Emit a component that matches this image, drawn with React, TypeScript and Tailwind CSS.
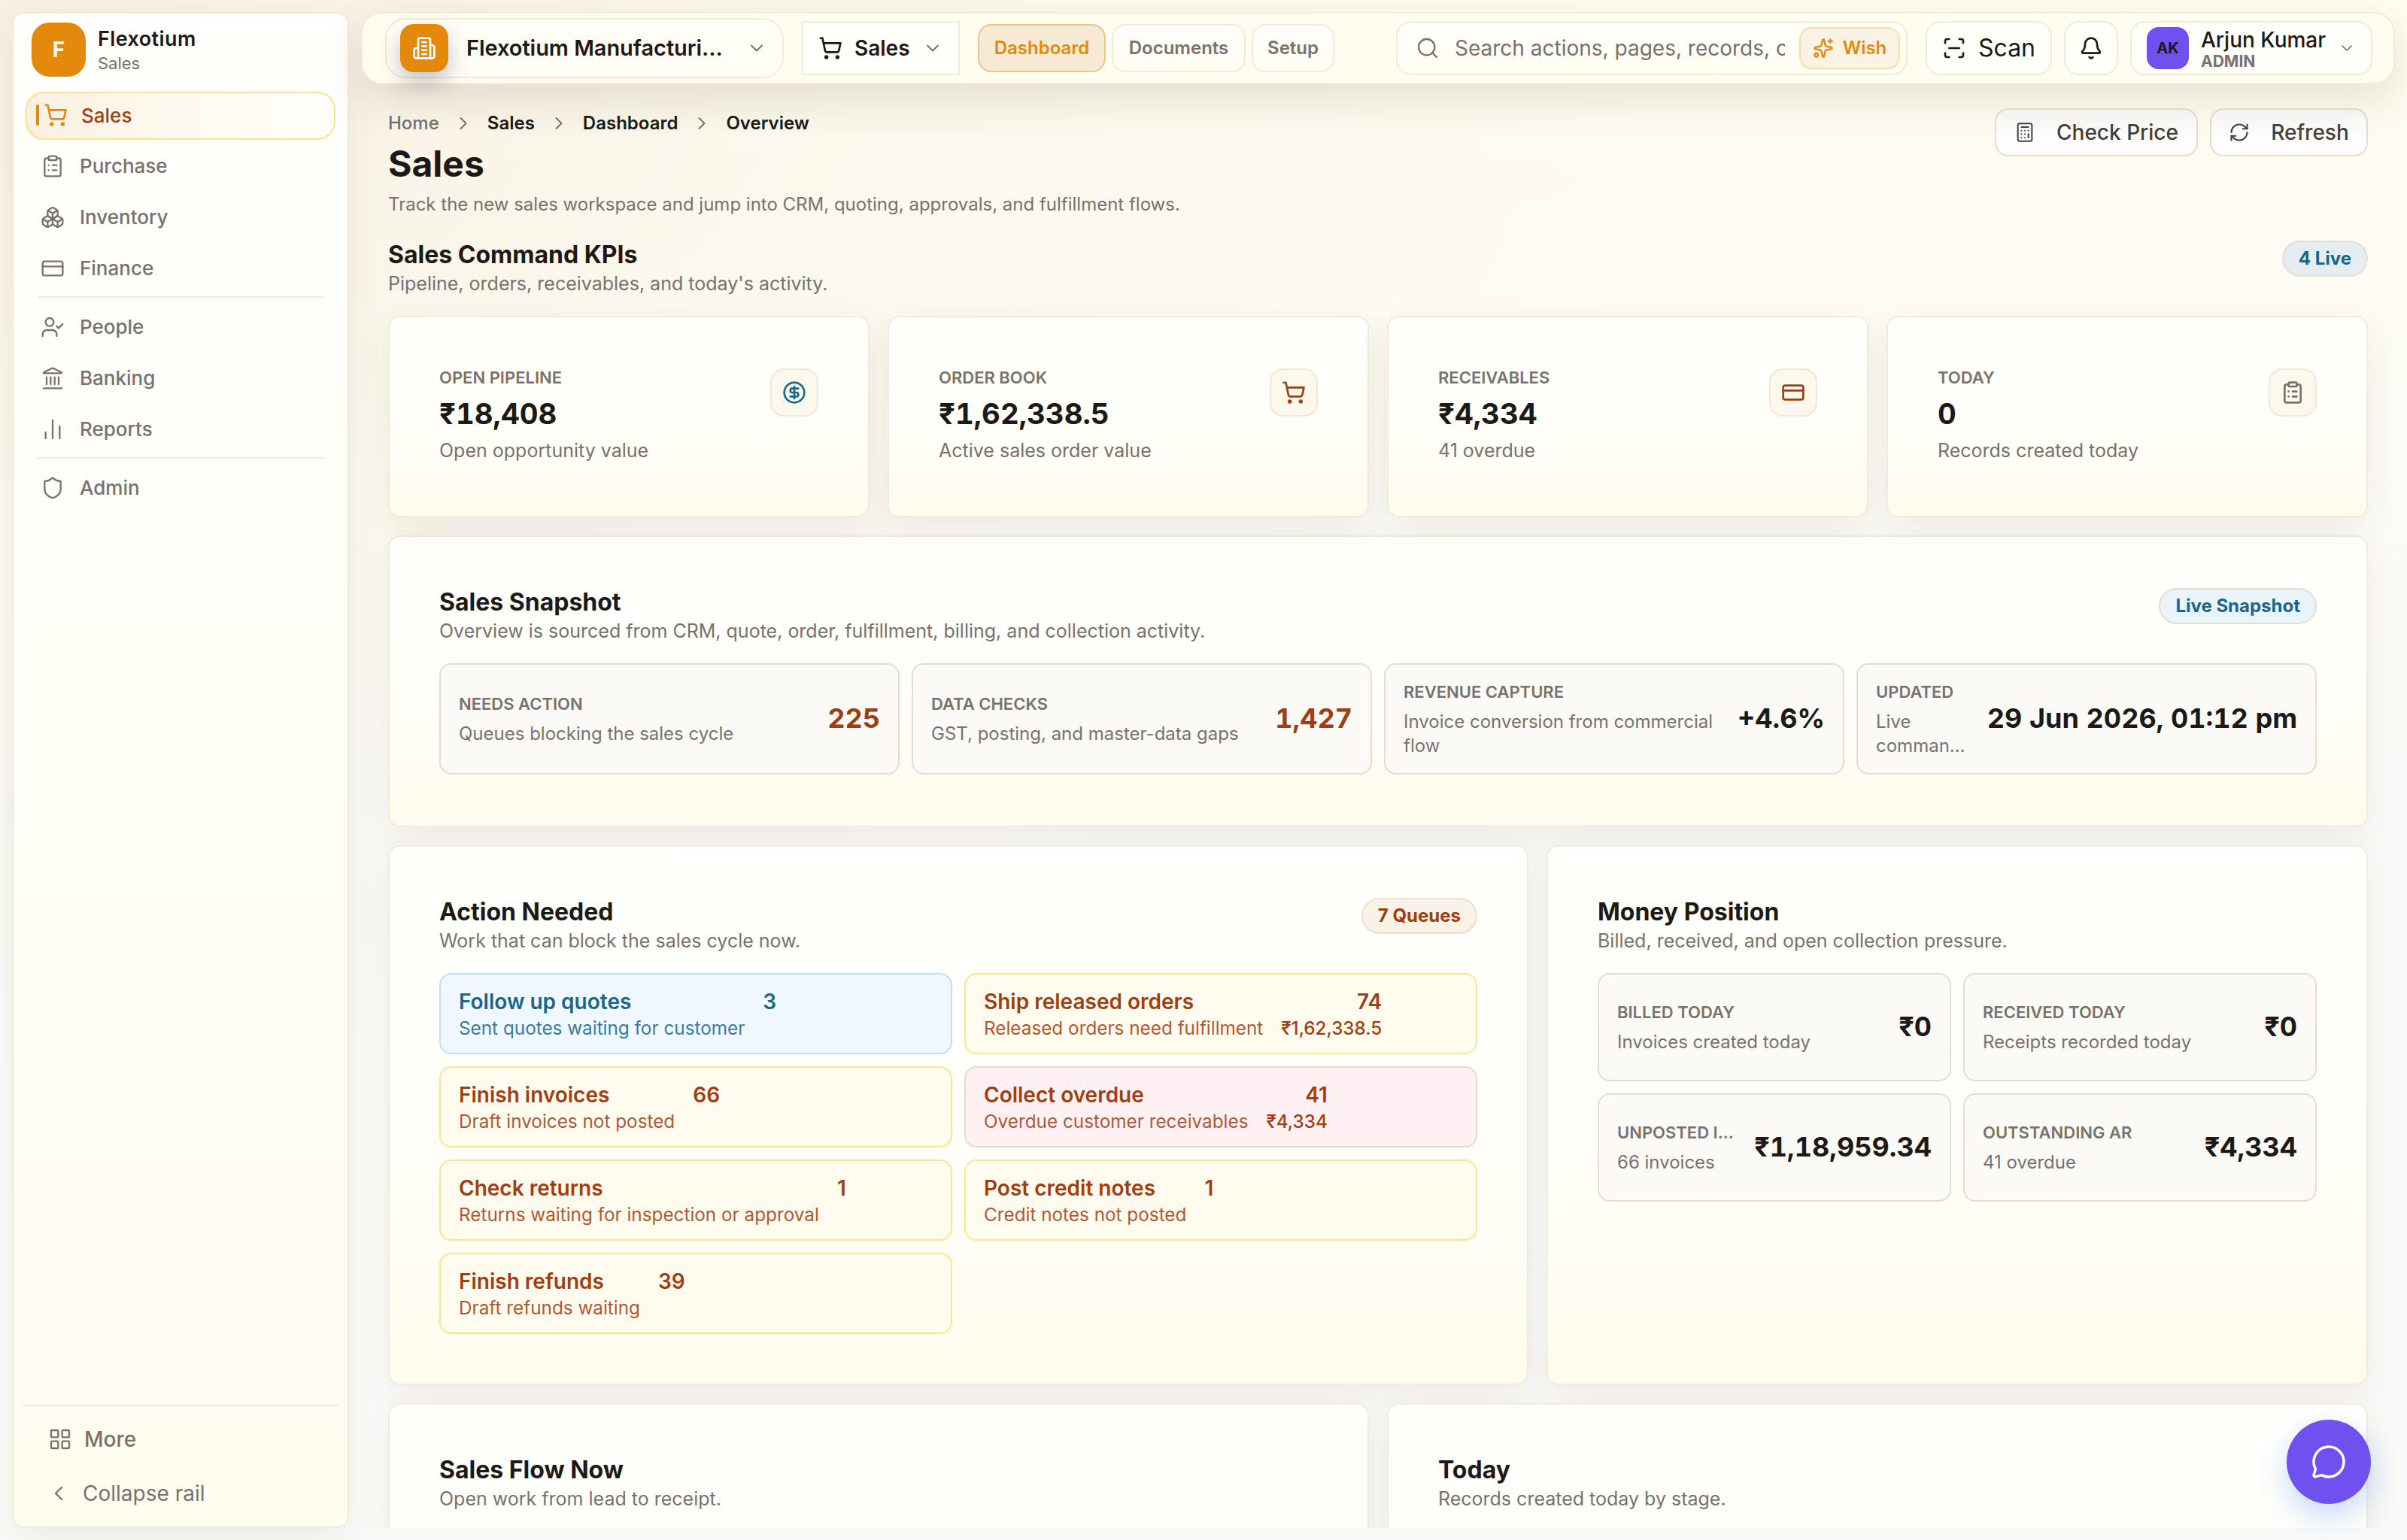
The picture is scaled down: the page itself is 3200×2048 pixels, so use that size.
import type { ReactNode } from "react";
import {
  Bell,
  Boxes,
  Calculator,
  ChartNoAxesColumn,
  ChevronDown,
  ChevronLeft,
  ChevronRight,
  CircleDollarSign,
  ClipboardList,
  CreditCard,
  Landmark,
  LayoutGrid,
  MessageCircle,
  RefreshCw,
  ScanLine,
  Search,
  Shield,
  ShoppingCart,
  Sparkles,
  UserCheck,
  type LucideIcon,
} from "lucide-react";

const navGroups: { label: string; icon: LucideIcon }[][] = [
  [
    { label: "Purchase", icon: ClipboardList },
    { label: "Inventory", icon: Boxes },
    { label: "Finance", icon: CreditCard },
  ],
  [
    { label: "People", icon: UserCheck },
    { label: "Banking", icon: Landmark },
    { label: "Reports", icon: ChartNoAxesColumn },
  ],
  [{ label: "Admin", icon: Shield }],
];

const kpis = [
  { label: "Open pipeline", value: "₹18,408", note: "Open opportunity value", icon: CircleDollarSign, tone: "text-[#1b658c]" },
  { label: "Order book", value: "₹1,62,338.5", note: "Active sales order value", icon: ShoppingCart, tone: "text-[#9f3e12]" },
  { label: "Receivables", value: "₹4,334", note: "41 overdue", icon: CreditCard, tone: "text-[#9f3e12]" },
  { label: "Today", value: "0", note: "Records created today", icon: ClipboardList, tone: "text-[#78716c]" },
];

const snapshot = [
  { label: "Needs action", note: "Queues blocking the sales cycle", value: "225", warn: true },
  { label: "Data checks", note: "GST, posting, and master-data gaps", value: "1,427", warn: true },
  { label: "Revenue capture", note: "Invoice conversion from commercial flow", value: "+4.6%" },
  { label: "Updated", note: "Live comman…", value: "29 Jun 2026, 01:12 pm" },
];

const money = [
  { label: "Billed today", note: "Invoices created today", value: "₹0" },
  { label: "Received today", note: "Receipts recorded today", value: "₹0" },
  { label: "Unposted i…", note: "66 invoices", value: "₹1,18,959.34" },
  { label: "Outstanding AR", note: "41 overdue", value: "₹4,334" },
];

const amber = "border-[#fbe591] bg-[#fffbee] text-[#9f3e12]";
const sky = "border-[#bfdff8] bg-[#f0f8ff] text-[#1b658c]";
const rose = "border-[#e7d8d0] bg-[#fff1f3] text-[#9f3e12]";

const queues = [
  { title: "Follow up quotes", note: "Sent quotes waiting for customer", count: "3", tone: sky },
  { title: "Ship released orders", note: "Released orders need fulfillment", count: "74", amount: "₹1,62,338.5", tone: amber },
  { title: "Finish invoices", note: "Draft invoices not posted", count: "66", tone: amber },
  { title: "Collect overdue", note: "Overdue customer receivables", count: "41", amount: "₹4,334", tone: rose },
  { title: "Check returns", note: "Returns waiting for inspection or approval", count: "1", tone: amber },
  { title: "Post credit notes", note: "Credit notes not posted", count: "1", tone: amber },
  { title: "Finish refunds", note: "Draft refunds waiting", count: "39", tone: amber },
];

function BuildingIcon() {
  return (
    <svg className="size-8" viewBox="0 0 24 24" fill="none" stroke="currentColor" strokeWidth="2" strokeLinecap="round" strokeLinejoin="round">
      <path d="M6 22V4a2 2 0 0 1 2-2h8a2 2 0 0 1 2 2v18Z" />
      <path d="M6 12H4a2 2 0 0 0-2 2v6a2 2 0 0 0 2 2h2" />
      <path d="M18 9h2a2 2 0 0 1 2 2v9a2 2 0 0 1-2 2h-2" />
      <path d="M10 6h4M10 10h4M10 14h4M10 18h4" />
    </svg>
  );
}

function Sidebar() {
  return (
    <aside className="flex h-[2016px] w-[448px] shrink-0 flex-col rounded-2xl border-2 border-[#f3ead6] bg-linear-to-b from-[#fffffd] to-[#fffdf0] shadow-[0_16px_48px_rgba(60,50,30,0.07)]">
      <div className="flex items-center gap-4 pt-3 pl-6">
        <div className="flex size-[72px] items-center justify-center rounded-[24px] bg-[#e5890c] text-[28px] font-bold text-white">F</div>
        <div className="pt-0.5">
          <div className="text-[27px] leading-[34px] font-semibold tracking-[0.015em] text-[#1c1917]">Flexotium</div>
          <div className="text-[22px] leading-[30px] text-[#78716c]">Sales</div>
        </div>
      </div>

      <nav className="mt-5 flex flex-col gap-1 px-4">
        <div className="flex h-16 items-center rounded-[24px] border-2 border-[#fae391] bg-linear-to-r from-[#f9f0e1] via-[#fffaf0] to-[#fffefb] pb-0.5 pl-3 text-[26px] font-medium text-[#9f3e12]">
          <span className="h-7 w-1 rounded-full bg-[#e5890c]" />
          <ShoppingCart className="ml-1.5 size-8 text-[#e5890c]" strokeWidth={2} />
          <span className="ml-[18px]">Sales</span>
        </div>
        {navGroups.map((group, i) => (
          <div key={i} className="flex flex-col gap-1">
            {i > 0 && <div className="mx-4 mb-1 h-0.5 bg-[#f5ecd8]" />}
            {group.map(({ label, icon: Icon }) => (
              <div key={label} className="flex h-16 items-center gap-5 pb-[3px] pl-5 text-[26px] font-medium text-[#78716c]">
                <Icon className="size-8" strokeWidth={1.75} />
                {label}
              </div>
            ))}
          </div>
        ))}
      </nav>

      <div className="mx-3 mt-auto h-[162px] border-t-2 border-[#f3ead6] text-[28px] text-[#78716c]">
        <div className="mt-2 flex h-[72px] items-center gap-4 pl-[34px] font-medium">
          <LayoutGrid className="size-8" strokeWidth={1.75} />
          More
        </div>
        <div className="flex h-[72px] items-center gap-4 pl-8">
          <ChevronLeft className="size-8" strokeWidth={1.75} />
          Collapse rail
        </div>
      </div>
    </aside>
  );
}

function Topbar() {
  return (
    <header className="relative z-10 flex h-24 items-center rounded-[28px] border-2 border-[#f4ead5] bg-[#fffdf0] pr-7 pl-[30px] text-[#1c1917] shadow-[inset_0_2px_0_#fff,0_20px_56px_rgba(80,65,30,0.14)]">
      <div className="flex h-20 w-[530px] shrink-0 items-center rounded-[28px] border-2 border-[#f4ead5] bg-[#fffef6] pl-[18px]">
        <div className="flex size-16 items-center justify-center rounded-[18px] bg-[#e5890c] text-white shadow-[0_14px_28px_rgba(70,60,100,0.3)]">
          <BuildingIcon />
        </div>
        <span className="ml-6 w-[348px] text-[29px] font-semibold tracking-[-0.002em] whitespace-nowrap">Flexotium Manufacturi…</span>
        <ChevronDown className="ml-6 size-7 text-[#78716c]" strokeWidth={1.75} />
      </div>

      <div className="ml-6 flex h-[72px] w-[210px] shrink-0 items-center border-2 border-[#f4ead5] bg-[#fffffc] pl-5 text-[28px] font-semibold">
        <ShoppingCart className="size-8" />
        <span className="ml-4">Sales</span>
        <ChevronDown className="ml-4 size-7 text-[#78716c]" strokeWidth={1.75} />
      </div>

      <div className="ml-6 flex shrink-0 gap-2 text-[24px] font-[560] text-[#78716c]">
        <span className="flex h-16 w-[170px] items-center justify-center rounded-[18px] border-2 border-[#edc58e] bg-[#f6ead5] font-semibold text-[#e5890c]">Dashboard</span>
        <span className="flex h-16 w-[178px] items-center justify-center rounded-[18px] border-2 border-[#f4ead5] bg-linear-to-b from-[#fffffc] to-[#fffdf2]">Documents</span>
        <span className="flex h-16 w-[110px] items-center justify-center rounded-[18px] border-2 border-[#f4ead5] bg-linear-to-b from-[#fffffc] to-[#fffdf2]">Setup</span>
      </div>

      <div className="ml-auto flex h-[72px] w-[680px] shrink-0 items-center rounded-[20px] border-2 border-[#f4ead5] bg-linear-to-b from-[#fffffc] to-[#fffdf2] pr-2 pl-6">
        <Search className="size-8 text-[#78716c]" strokeWidth={1.75} />
        <span className="ml-5 w-[439px] overflow-hidden text-[28px] whitespace-nowrap text-[#78716c]">Search actions, pages, records, c</span>
        <span className="ml-auto flex h-14 w-[134px] shrink-0 items-center justify-center gap-3 rounded-2xl border-2 border-[#fae0a0] bg-[#faf2e4] text-[24px] font-semibold text-[#e5890c]">
          <Sparkles className="size-7" />
          Wish
        </span>
      </div>

      <div className="ml-6 flex h-[72px] w-[168px] shrink-0 items-center justify-center gap-4 rounded-[20px] border-2 border-[#f4ead5] bg-[#fffffa] text-[32px]">
        <ScanLine className="size-8" />
        Scan
      </div>
      <div className="ml-4 flex size-[72px] shrink-0 items-center justify-center rounded-[20px] border-2 border-[#f4ead5] bg-[#fffffa]">
        <Bell className="size-8" />
      </div>
      <div className="ml-4 flex h-[72px] w-[322px] shrink-0 items-center rounded-[20px] border-2 border-[#f4ead5] bg-[#fffffa] pl-5">
        <div className="flex size-14 items-center justify-center rounded-2xl bg-[#7050ee] text-[20px] font-bold">AK</div>
        <div className="ml-4 pt-1">
          <div className="text-[28px] leading-[32px] font-medium">Arjun Kumar</div>
          <div className="text-[21px] leading-[26px] font-bold text-[#78716c]">ADMIN</div>
        </div>
        <ChevronDown className="ml-4 size-6 text-[#78716c]" strokeWidth={1.75} />
      </div>
    </header>
  );
}

function Heading({ title, note, badge, badgeTone }: { title: string; note: string; badge?: string; badgeTone?: string }) {
  return (
    <div className="mb-[26px] flex justify-between">
      <div>
        <h2 className="text-[32px] leading-[42px] font-bold text-[#1c1917]">{title}</h2>
        <p className="text-[25px] leading-[34px] text-[#78716c]">{note}</p>
      </div>
      {badge && (
        <span className={`mt-0.5 flex h-12 items-center rounded-full border-2 px-5 text-[24px] font-bold ${badgeTone}`}>{badge}</span>
      )}
    </div>
  );
}

function Card({ className = "", children }: { className?: string; children: ReactNode }) {
  return (
    <section className={`rounded-2xl border-2 border-[#f4ebd8] bg-linear-to-b from-[#fffffd] via-[#fffffa] to-[#fffcee] p-[66px] shadow-[0_16px_48px_rgba(60,50,30,0.07)] ${className}`}>
      {children}
    </section>
  );
}

function Metric({ label, note, value, warn, tall }: { label: string; note: string; value: string; warn?: boolean; tall: string }) {
  return (
    <div className={`flex items-center justify-between gap-6 rounded-2xl border-2 border-[#e8dcd0] bg-[#fbfaf7] px-6 ${tall}`}>
      <div className="min-w-0">
        <div className="truncate text-[22px] leading-8 font-[560] text-[#78716c] uppercase">{label}</div>
        <div className="mt-2 line-clamp-2 text-[24px] leading-8 text-[#78716c]">{note}</div>
      </div>
      <div className={`shrink-0 pb-0.5 text-[36px] leading-none font-[650] tabular-nums ${warn ? "text-[#9f3e12]" : "text-[#1c1917]"}`}>{value}</div>
    </div>
  );
}

export default function App() {
  return (
    <div className="flex h-[2048px] w-[3200px] gap-4 overflow-hidden bg-[radial-gradient(ellipse_at_0%_0%,#f8f0e2_0%,rgba(250,246,234,0.6)_25%,transparent_50%),linear-gradient(180deg,#fffcf0_0%,#fdfbf3_20%,#fafaf8_50%,#fafaf8_100%)] p-4 font-['Inter',sans-serif]">
      <Sidebar />

      <div className="flex h-[2016px] w-[2704px] flex-col">
        <Topbar />

        <main className="h-[1920px] overflow-hidden px-9 pt-8">
          <div className="flex h-[174px] justify-between">
            <div>
              <div className="flex h-10 items-center text-[24px] font-[560] text-[#1c1917]">
                <span className="font-medium text-[#78716c]">Home</span>
                <ChevronRight className="mx-[18px] size-7 text-[#78716c]" strokeWidth={1.75} />
                <span>Sales</span>
                <ChevronRight className="mx-[18px] size-7 text-[#78716c]" strokeWidth={1.75} />
                <span>Dashboard</span>
                <ChevronRight className="mx-[18px] size-7 text-[#78716c]" strokeWidth={1.75} />
                <span>Overview</span>
              </div>
              <h1 className="mt-1 text-[48px] leading-[60px] font-bold text-[#1c1917]">Sales</h1>
              <p className="mt-1.5 text-[24px] leading-[36px] text-[#78716c]">
                Track the new sales workspace and jump into CRM, quoting, approvals, and fulfillment flows.
              </p>
            </div>
            <div className="flex gap-4 text-[28px] font-medium text-[#44403c]">
              <button className="flex h-16 w-[270px] items-center justify-center gap-7 rounded-[18px] border-2 border-[#e9ddd2] bg-linear-to-b from-[#fbfaf9] to-white">
                <Calculator className="size-7" strokeWidth={1.75} />
                Check Price
              </button>
              <button className="flex h-16 w-[210px] items-center justify-center gap-7 rounded-[18px] border-2 border-[#e9ddd2] bg-linear-to-b from-[#fbfaf9] to-white">
                <RefreshCw className="size-7" strokeWidth={1.75} />
                Refresh
              </button>
            </div>
          </div>

          <Heading
            title="Sales Command KPIs"
            note="Pipeline, orders, receivables, and today's activity."
            badge="4 Live"
            badgeTone="border-[#e8ddd2] bg-[#e4eef2] text-[#1b658c]"
          />

          <div className="grid grid-cols-4 gap-6">
            {kpis.map(({ label, value, note, icon: Icon, tone }) => (
              <Card key={label} className="flex h-[268px] justify-between">
                <div>
                  <div className="text-[22px] leading-7 font-semibold text-[#78716c] uppercase">{label}</div>
                  <div className="mt-2.5 text-[38.4px] leading-[48px] font-bold text-[#1c1917] tabular-nums">{value}</div>
                  <div className="mt-[7px] text-[25px] leading-[36px] text-[#78716c]">{note}</div>
                </div>
                <div className={`mt-0.5 flex size-16 items-center justify-center rounded-[18px] border-2 border-[#f2e6d6] bg-[#fdf8ec] ${tone}`}>
                  <Icon className="size-8" />
                </div>
              </Card>
            ))}
          </div>

          <Card className="mt-6 h-[388px]">
            <Heading
              title="Sales Snapshot"
              note="Overview is sourced from CRM, quote, order, fulfillment, billing, and collection activity."
              badge="Live Snapshot"
              badgeTone="border-[#e4ddd4] bg-[#e9f4fb] text-[#1b658c]"
            />
            <div className="grid grid-cols-4 gap-4">
              {snapshot.map((item) => (
                <Metric key={item.label} {...item} tall="h-[148px]" />
              ))}
            </div>
          </Card>

          <div className="mt-6 flex h-[718px] gap-6">
            <Card className="w-[1516px]">
              <Heading
                title="Action Needed"
                note="Work that can block the sales cycle now."
                badge="7 Queues"
                badgeTone="border-[#efdfca] bg-[#faf2e6] text-[#9f3e12]"
              />
              <div className="grid grid-cols-2 gap-4">
                {queues.map(({ title, note, count, amount, tone }) => (
                  <div key={title} className={`flex h-[108px] gap-6 rounded-2xl border-2 px-6 py-4 ${tone}`}>
                    <div>
                      <div className="text-[28px] leading-10 font-[560]">{title}</div>
                      <div className="text-[24.3px] leading-[31px] opacity-85">{note}</div>
                    </div>
                    <div className="text-right">
                      <div className="text-[28px] leading-10 font-[560]">{count}</div>
                      {amount && <div className="text-[24.2px] leading-[31px] font-medium">{amount}</div>}
                    </div>
                  </div>
                ))}
              </div>
            </Card>

            <Card className="w-[1092px]">
              <Heading title="Money Position" note="Billed, received, and open collection pressure." />
              <div className="grid grid-cols-2 gap-4">
                {money.map((item) => (
                  <Metric key={item.label} {...item} tall="h-36" />
                ))}
              </div>
            </Card>
          </div>

          <div className="mt-6 grid grid-cols-2 gap-6">
            <Card className="h-[400px]">
              <Heading title="Sales Flow Now" note="Open work from lead to receipt." />
            </Card>
            <Card className="h-[400px]">
              <Heading title="Today" note="Records created today by stage." />
            </Card>
          </div>
        </main>
      </div>

      <button className="fixed top-[1888px] left-[3040px] flex size-28 items-center justify-center rounded-full bg-[#7050ee] text-white shadow-[0_16px_40px_rgba(60,130,240,0.3)]">
        <MessageCircle className="size-12" strokeWidth={1.75} />
      </button>
    </div>
  );
}
